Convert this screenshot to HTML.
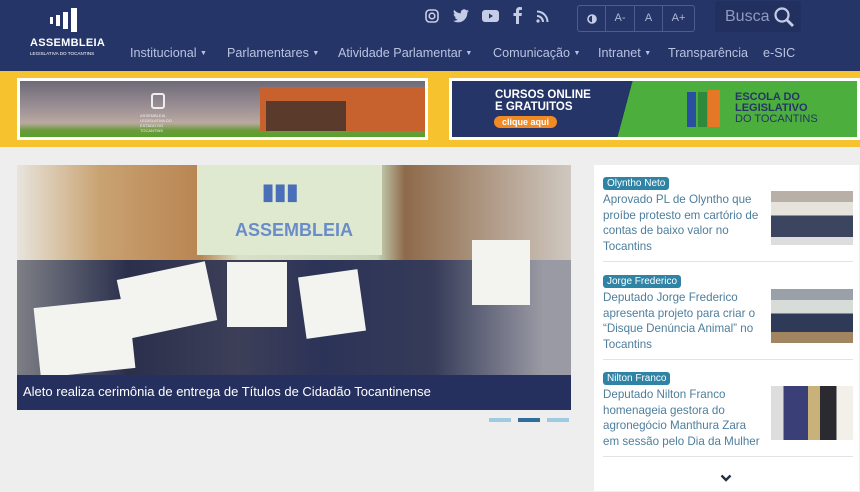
<!DOCTYPE html>
<html><head><meta charset="utf-8"><style>
*{margin:0;padding:0;box-sizing:border-box}
body{width:860px;height:492px;overflow:hidden;background:#eeeeee;font-family:"Liberation Sans",sans-serif;position:relative}
.hdr{position:absolute;left:0;top:0;width:860px;height:71px;background:#253568}
.yb{position:absolute;left:0;top:71px;width:860px;height:76px;background:#f6c22e}
.nav{position:absolute;top:46px;color:#b9c3e0;font-size:12.6px;white-space:nowrap}
.nav span.m{position:absolute;top:0}
.car{font-size:7px;vertical-align:2px}
.side{position:absolute;left:594px;top:165px;width:265px;height:326px;background:#fff}
.it{position:absolute;left:9px;width:250px;border-bottom:1px solid #e3e3e3;height:97px}
.tag{display:inline-block;background:#2f84a6;color:#fff;font-size:10px;padding:1px 4px;border-radius:3px;margin-top:12px}
.tt{font-size:11.6px;line-height:15.7px;color:#4d7e9c;width:160px;margin-top:1px}
.th{position:absolute;right:0;top:26px;width:82px;height:54px}
</style></head><body>
<div class="hdr"></div>
<svg style="position:absolute;left:48px;top:6px" width="34" height="28"><rect x="2" y="11" width="3" height="7" fill="#fff"/><rect x="8" y="9" width="4" height="11" fill="#fff"/><rect x="15" y="6" width="5" height="17" fill="#fff"/><rect x="23" y="2" width="6" height="24" fill="#fff"/></svg>
<div style="position:absolute;left:30px;top:37px;color:#fff;font-weight:bold;font-size:11px;letter-spacing:.3px">ASSEMBLEIA</div>
<div style="position:absolute;left:30px;top:51px;color:#fff;font-size:4.6px">LEGISLATIVA DO TOCANTINS</div>
<div class="nav">
<span class="m" style="left:130px">Institucional <span class="car">▼</span></span>
<span class="m" style="left:227px">Parlamentares <span class="car">▼</span></span>
<span class="m" style="left:338px">Atividade Parlamentar <span class="car">▼</span></span>
<span class="m" style="left:493px">Comunicação <span class="car">▼</span></span>
<span class="m" style="left:598px">Intranet <span class="car">▼</span></span>
<span class="m" style="left:668px">Transparência</span>
<span class="m" style="left:763px">e-SIC</span></div>
<svg style="position:absolute;left:425px;top:9px" width="14" height="14"><rect x="1" y="1" width="12" height="12" rx="3.5" fill="none" stroke="#c5cde6" stroke-width="1.6"/><circle cx="7" cy="7" r="2.8" fill="none" stroke="#c5cde6" stroke-width="1.6"/></svg>
<svg style="position:absolute;left:453px;top:9px" width="16" height="14" viewBox="0 0 24 20"><path d="M24 2.4a10 10 0 0 1-2.8.8A5 5 0 0 0 23.3.4a10 10 0 0 1-3.1 1.2A4.9 4.9 0 0 0 11.8 6 14 14 0 0 1 1.7.9a4.9 4.9 0 0 0 1.5 6.6A4.9 4.9 0 0 1 1 6.9a4.9 4.9 0 0 0 3.9 4.9 4.9 4.9 0 0 1-2.2.1 4.9 4.9 0 0 0 4.6 3.4A9.9 9.9 0 0 1 0 17.3 14 14 0 0 0 7.5 19.5c9 0 14-7.5 14-14v-.6A10 10 0 0 0 24 2.4z" fill="#c5cde6"/></svg>
<svg style="position:absolute;left:482px;top:10px" width="17" height="12"><rect width="17" height="12" rx="3" fill="#c5cde6"/><path d="M7 3.5L11 6 7 8.5z" fill="#253568"/></svg>
<svg style="position:absolute;left:513px;top:7px" width="9" height="17"><path d="M6 17V9h2.5l.4-3H6V4.3c0-.9.3-1.4 1.5-1.4H9V.2A20 20 0 0 0 6.8 0C4.6 0 3 1.3 3 3.8V6H.5v3H3v8z" fill="#c5cde6"/></svg>
<svg style="position:absolute;left:536px;top:10px" width="13" height="13"><circle cx="2" cy="11" r="1.6" fill="#c5cde6"/><path d="M1 6a6 6 0 0 1 6 6M1 1.5a10.5 10.5 0 0 1 10.5 10.5" fill="none" stroke="#c5cde6" stroke-width="2"/></svg>
<div style="position:absolute;left:577px;top:5px;width:118px;height:27px;border:1px solid #4c5c8e;border-radius:3px;display:flex;color:#aeb8d8;font-size:11px">
<div style="width:28px;border-right:1px solid #4c5c8e;position:relative"><svg style="position:absolute;left:9px;top:8px" width="10" height="10"><circle cx="5" cy="5" r="4" fill="none" stroke="#c5cde6" stroke-width="1.6"/><path d="M5 1a4 4 0 0 1 0 8z" fill="#c5cde6"/></svg></div><div style="width:29px;border-right:1px solid #4c5c8e;text-align:center;line-height:25px">A-</div><div style="width:28px;border-right:1px solid #4c5c8e;text-align:center;line-height:25px">A</div><div style="flex:1;text-align:center;line-height:25px">A+</div></div>
<div style="position:absolute;left:715px;top:1px;width:86px;height:31px;background:#22305f;border-radius:3px;color:#8e9abf;font-size:16px;line-height:31px;padding-left:10px">Busca</div>
<svg style="position:absolute;left:773px;top:6px" width="22" height="22"><circle cx="9" cy="9" r="6.5" fill="none" stroke="#c5cde6" stroke-width="2.2"/><path d="M14 14l6 6" stroke="#c5cde6" stroke-width="2.8"/></svg>
<div class="yb"></div>
<div style="position:absolute;left:17px;top:78px;width:411px;height:62px;background:#fff;padding:3px">
<div style="width:100%;height:100%;background:linear-gradient(180deg,#6e6a78 0%,#9a8e94 45%,#b9a9a0 75%,#6b9a3c 88%,#58a02a 100%);position:relative">
<div style="position:absolute;left:240px;top:6px;width:165px;height:44px;background:#c7622e"></div>
<div style="position:absolute;left:246px;top:20px;width:80px;height:30px;background:#5a3a2a"></div>
<div style="position:absolute;left:131px;top:12px;width:14px;height:16px;border:2px solid #eee;border-radius:3px"></div>
<div style="position:absolute;left:120px;top:32px;color:#eee;font-size:4px;width:40px">ASSEMBLEIA LEGISLATIVA DO ESTADO DO TOCANTINS</div>
</div></div>
<div style="position:absolute;left:449px;top:78px;width:411px;height:62px;background:#fff;padding:3px">
<div style="width:100%;height:100%;background:linear-gradient(105deg,#253568 0 43%,#4cae3c 43% 100%);position:relative">
<div style="position:absolute;left:43px;top:8px;color:#fff;font-weight:bold;font-size:11.5px;line-height:12px">CURSOS ONLINE<br>E GRATUITOS</div>
<div style="position:absolute;left:42px;top:35px;background:#f08a24;color:#fff;font-weight:bold;font-size:9px;padding:1px 8px;border-radius:6px">clique aqui</div>
<div style="position:absolute;left:235px;top:11px;width:9px;height:35px;background:#2a4fa0"></div>
<div style="position:absolute;left:246px;top:11px;width:9px;height:35px;background:#2d8a3a"></div>
<div style="position:absolute;left:256px;top:9px;width:12px;height:37px;background:#e47827"></div>
<div style="position:absolute;left:283px;top:11px;color:#253568;font-weight:bold;font-size:11px;line-height:11px">ESCOLA DO<br>LEGISLATIVO<br><span style="font-weight:normal">DO TOCANTINS</span></div>
</div></div>
<div style="position:absolute;left:17px;top:165px;width:554px;height:245px;background:linear-gradient(90deg,#e8e4dc 0%,#c9a271 15%,#b88552 33%,#d9e0c8 40%,#c8d4b8 65%,#8e6a4a 70%,#cfc8c0 100%);overflow:hidden">
<div style="position:absolute;left:180px;top:0;width:185px;height:90px;background:#dfe9cf"></div>
<div style="position:absolute;left:245px;top:14px;color:#4a6fb8;font-weight:bold;font-size:22px">▮▮▮</div>
<div style="position:absolute;left:218px;top:55px;color:#6a8cc8;font-weight:bold;font-size:18px">ASSEMBLEIA</div>
<div style="position:absolute;left:0;top:95px;width:554px;height:115px;background:linear-gradient(90deg,#7d7f86,#2a2f4c 20%,#3d3f58 40%,#2c3358 55%,#353b58 75%,#9a9aa4 95%)"></div>
<div style="position:absolute;left:20px;top:138px;width:95px;height:70px;background:#f3f3ef;transform:rotate(-6deg)"></div>
<div style="position:absolute;left:105px;top:105px;width:90px;height:60px;background:#f3f3ef;transform:rotate(-12deg)"></div>
<div style="position:absolute;left:210px;top:97px;width:60px;height:65px;background:#f3f3ef"></div>
<div style="position:absolute;left:285px;top:108px;width:60px;height:62px;background:#f3f3ef;transform:rotate(-8deg)"></div>
<div style="position:absolute;left:455px;top:75px;width:58px;height:65px;background:#f3f3ef"></div>
<div style="position:absolute;left:0;top:210px;width:554px;height:35px;background:#25305e;color:#fff;font-size:13px;line-height:34px;padding-left:6px">Aleto realiza cerimônia de entrega de Títulos de Cidadão Tocantinense</div>
</div>
<div style="position:absolute;left:489px;top:418px;width:22px;height:4px;background:#9fcbe0"></div>
<div style="position:absolute;left:518px;top:418px;width:22px;height:4px;background:#2f6d9a"></div>
<div style="position:absolute;left:547px;top:418px;width:22px;height:4px;background:#9fcbe0"></div>
<div class="side">
<div class="it" style="top:0"><span class="tag">Olyntho Neto</span><div class="tt">Aprovado PL de Olyntho que proíbe protesto em cartório de contas de baixo valor no Tocantins</div><div class="th" style="background:linear-gradient(180deg,#b8b0a6 0 20%,#e6e2dc 20% 45%,#3c4560 45% 85%,#ddd 85%)"></div></div>
<div class="it" style="top:98px"><span class="tag">Jorge Frederico</span><div class="tt">Deputado Jorge Frederico apresenta projeto para criar o “Disque Denúncia Animal” no Tocantins</div><div class="th" style="background:linear-gradient(180deg,#9aa0a8 0 20%,#d8dcd8 20% 45%,#2f3a58 45% 80%,#a08560 80%)"></div></div>
<div class="it" style="top:195px"><span class="tag">Nilton Franco</span><div class="tt">Deputado Nilton Franco homenageia gestora do agronegócio Manthura Zara em sessão pelo Dia da Mulher</div><div class="th" style="background:linear-gradient(90deg,#ddd 0 15%,#3a3f78 15% 45%,#c8b27a 45% 60%,#2a2a30 60% 80%,#f2f0e8 80%)"></div></div>
<svg style="position:absolute;left:126px;top:309px" width="12" height="8"><path d="M1.5 1.5L6 6l4.5-4.5" fill="none" stroke="#253040" stroke-width="2.4"/></svg>
</div>
</body></html>
